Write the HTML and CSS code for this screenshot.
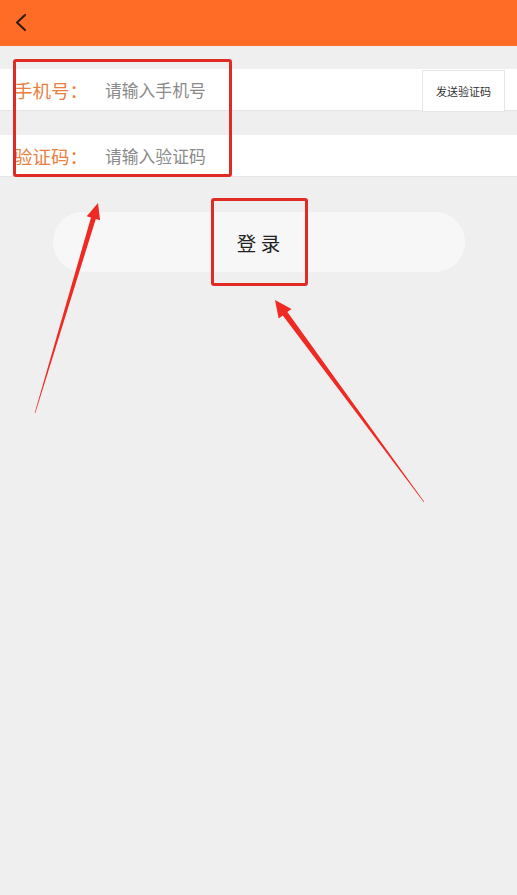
FILE: index.html
```html
<!DOCTYPE html>
<html lang="zh-CN">
<head>
  <meta charset="UTF-8">
  <meta name="viewport" content="width=device-width, initial-scale=1.0">
  <title>登录</title>
  <link rel="stylesheet" href="styles.css">
</head>
<body>
  <header class="topbar">
    <a class="back" href="#" title="返回">
      <svg width="14" height="20" viewBox="0 0 14 20">
        <polyline points="11,2 3,9.5 11,17" fill="none" stroke="#2b1a12" stroke-width="2" stroke-linecap="round" stroke-linejoin="round"/>
      </svg>
    </a>
  </header>

  <main class="login">
    <!-- Formulario -->
    <div class="field">
      <label for="tel">手机号：</label>
      <input type="text" id="tel" placeholder="请输入手机号">
      <button type="button" class="send-code">发送验证码</button>
    </div>
    <div class="field">
      <label for="code">验证码：</label>
      <input type="text" id="code" placeholder="请输入验证码">
    </div>

    <button type="button" class="btn-login">登 录</button>
  </main>

  <!-- Marcas de anotación -->
  <div class="mark mark-form"></div>
  <div class="mark mark-btn"></div>
  <svg class="arrows" width="517" height="895" viewBox="0 0 517 895">
    <polygon fill="#ee2a22" points="98,203 100.1,220.3 95.8,219 35.3,413.1 34.7,412.9 91,217.6 86.7,216.3"/>
    <polygon fill="#ee2a22" points="275,300 291.5,309 287.4,312 424.2,501.8 423.8,502.2 282.8,315.4 278.7,318.4"/>
  </svg>
</body>
</html>
```

FILE: styles.css
```css
/* Estilos generales */
body {
  margin: 0;
  padding: 0;
  min-height: 100vh;
  background-color: #f0eff0;
  font-family: "Noto Sans CJK SC", "Noto Sans", sans-serif;
  position: relative;
}

/* Encabezado */
.topbar {
  height: 46px;
  background-color: #fe6c25;
  display: flex;
  align-items: center;
  padding-left: 14px;
  box-sizing: border-box;
}

.back {
  display: flex;
}

/* Contenedor principal */
.login {
  padding-top: 23px;
}

.field {
  height: 42px;
  background-color: #ffffff;
  display: flex;
  align-items: center;
  padding: 0 12px 0 14px;
  margin-bottom: 24px;
  border-bottom: 1px solid #e6e6e6;
  box-sizing: border-box;
}

.field label {
  width: 91px;
  font-size: 18.5px;
  color: #e9803f;
  flex-shrink: 0;
}

.field input {
  flex: 1;
  border: none;
  outline: none;
  font-family: inherit;
  font-size: 16.8px;
  color: #333;
  background: transparent;
  padding: 0;
  min-width: 0;
}

.field input::placeholder {
  color: #8a8a8a;
}

.send-code {
  width: 83px;
  height: 42px;
  margin-top: 2px;
  background-color: #ffffff;
  border: 1px solid #e6e6e6;
  font-family: inherit;
  font-size: 11px;
  color: #333;
  padding: 0;
}

/* Botón */
.btn-login {
  display: block;
  width: 412px;
  height: 60px;
  margin: 35px auto 0;
  border: none;
  border-radius: 30px;
  background-color: #f7f7f7;
  font-family: inherit;
  font-size: 19.5px;
  color: #222;
}

/* Anotaciones */
.mark {
  position: absolute;
  border: 3px solid #e02a24;
  border-radius: 3px;
  box-sizing: border-box;
}

.mark-form {
  left: 13px;
  top: 59px;
  width: 219px;
  height: 118px;
}

.mark-btn {
  left: 211px;
  top: 198px;
  width: 97px;
  height: 88px;
}

.arrows {
  position: absolute;
  left: 0;
  top: 0;
  pointer-events: none;
}
```
